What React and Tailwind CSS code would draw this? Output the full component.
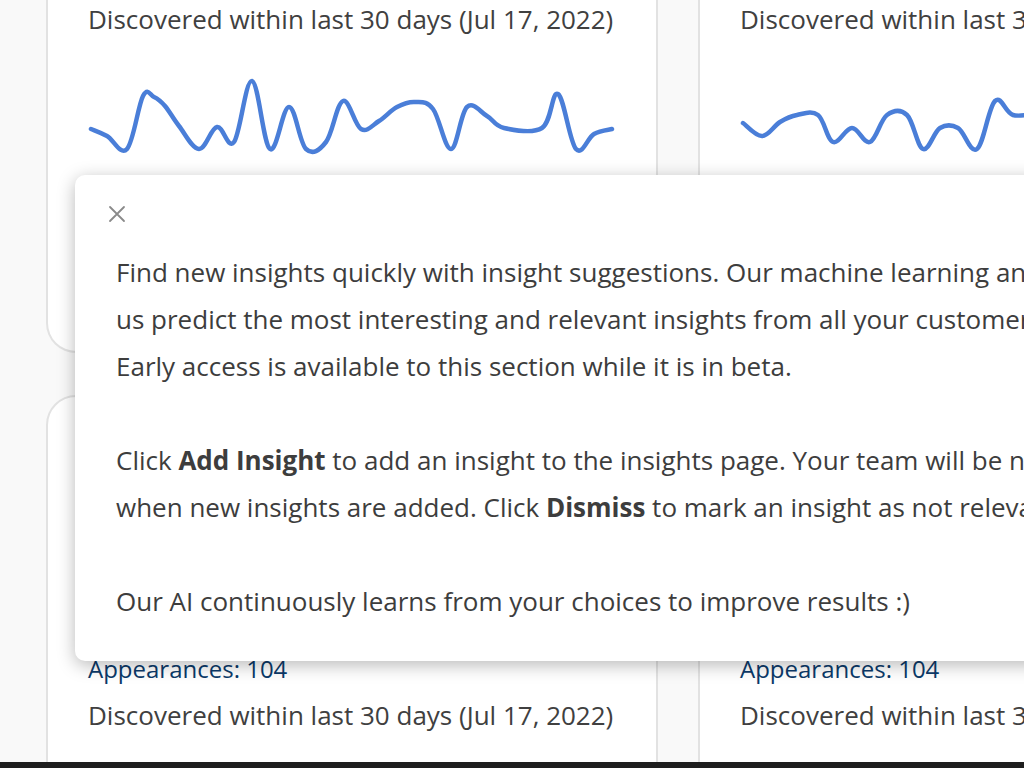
import React from "react";

const leftPoints = [
  [91, 130], [107, 137], [127, 150], [143, 97], [154, 98], [165, 107], [179, 127],
  [199, 150], [217, 128], [234, 143], [252, 82], [270, 150], [289, 108], [306, 150],
  [326, 143], [343, 102], [361, 130], [379, 122], [397, 108], [415, 103], [433, 110],
  [451, 150], [467, 108], [487, 117], [504, 129], [542, 129], [558, 95], [576, 150],
  [594, 135], [612, 130],
];

const rightPoints = [
  [743, 124], [762, 137], [780, 123], [797, 116], [818, 116], [833, 143], [852, 129],
  [870, 143], [887, 116], [907, 116], [923, 150], [940, 129], [958, 129], [977, 150],
  [995, 102], [1013, 116], [1040, 116], [1060, 130], [1080, 110], [1110, 140],
];

// catmull-rom -> bezier, points in page coords, shifted into the svg box
function smoothPath(points, dx, dy) {
  const p = points.map(([x, y]) => [x - dx, y - dy]);
  let d = `M${p[0][0]},${p[0][1]}`;
  for (let i = 0; i < p.length - 1; i++) {
    const p0 = p[i - 1] || p[i];
    const p1 = p[i];
    const p2 = p[i + 1];
    const p3 = p[i + 2] || p2;
    const t = 0.18;
    const c1x = p1[0] + (p2[0] - p0[0]) * t;
    const c1y = p1[1] + (p2[1] - p0[1]) * t;
    const c2x = p2[0] - (p3[0] - p1[0]) * t;
    const c2y = p2[1] - (p3[1] - p1[1]) * t;
    d += ` C${c1x.toFixed(1)},${c1y.toFixed(1)} ${c2x.toFixed(1)},${c2y.toFixed(1)} ${p2[0]},${p2[1]}`;
  }
  return d;
}

function Sparkline({ points, originX }) {
  return (
    <svg width="528" height="110" viewBox="0 0 528 110" className="block mt-[18px] overflow-visible">
      <path
        d={smoothPath(points, originX, 62)}
        fill="none"
        stroke="#4a7ed8"
        strokeWidth="4.5"
        strokeLinecap="round"
        strokeLinejoin="round"
      />
    </svg>
  );
}

function TopCard({ points, originX }) {
  return (
    <div className="w-[612px] shrink-0 bg-white border-2 border-[#e2e2e2] border-t-0 rounded-b-[30px] px-[40px] pt-[69px] pb-[180px]">
      <div className="leading-[47px] text-[24px] text-[#0b3a6a]">Appearances: 104</div>
      <div className="leading-[47px] text-[#404040]">Discovered within last 30 days (Jul 17, 2022)</div>
      <Sparkline points={points} originX={originX} />
    </div>
  );
}

function BottomCard({ points, originX }) {
  return (
    <div className="w-[612px] shrink-0 bg-white border-2 border-[#e2e2e2] rounded-t-[30px] px-[40px] pt-[40px] pb-[40px]">
      <div className="h-[208px]" />
      <div className="leading-[47px] text-[24px] text-[#0b3a6a]">Appearances: 104</div>
      <div className="leading-[47px] text-[#404040]">Discovered within last 30 days (Jul 17, 2022)</div>
      <Sparkline points={points} originX={originX} />
    </div>
  );
}

export default function App() {
  return (
    <div className="h-screen w-full flex flex-col overflow-hidden bg-[#f9f9f9] text-[26px] font-['Open_Sans',sans-serif] relative">
      <main className="flex-1 overflow-hidden">
        <div className="-mt-[120px] pl-[46px] flex flex-col gap-[42px]">
          <div className="flex gap-[40px]">
            <TopCard points={leftPoints} originX={88} />
            <TopCard points={rightPoints} originX={740} />
          </div>
          <div className="flex gap-[40px]">
            <BottomCard points={leftPoints} originX={88} />
            <BottomCard points={rightPoints} originX={740} />
          </div>
        </div>
      </main>
      <div className="h-[6px] bg-[#1e1e1e] shrink-0" />

      <div className="absolute left-[75px] top-[175px] w-[1200px] bg-white rounded-[10px] shadow-[0_4px_18px_rgba(0,0,0,0.28)] pl-[41px] pt-[30px] pb-[36px] text-[#3d3d3d]">
        <button className="block w-[18px] h-[18px] ml-[-8px] text-[#8a8a8a]">
          <svg width="18" height="18" viewBox="0 0 18 18">
            <path d="M2 2 L16 16 M16 2 L2 16" stroke="currentColor" strokeWidth="1.8" strokeLinecap="round" />
          </svg>
        </button>
        <div className="mt-[26px] leading-[47px] whitespace-nowrap">
          <p>
            Find new insights quickly with insight suggestions. Our machine learning and AI models help
            <br />
            us predict the most interesting and relevant insights from all your customer feedback.
            <br />
            Early access is available to this section while it is in beta.
          </p>
          <p className="mt-[47px]">
            Click <b className="font-bold">Add Insight</b> to add an insight to the insights page. Your team will be notified
            <br />
            when new insights are added. Click <b className="font-bold">Dismiss</b> to mark an insight as not relevant.
          </p>
          <p className="mt-[47px]">Our AI continuously learns from your choices to improve results :)</p>
        </div>
      </div>
    </div>
  );
}
